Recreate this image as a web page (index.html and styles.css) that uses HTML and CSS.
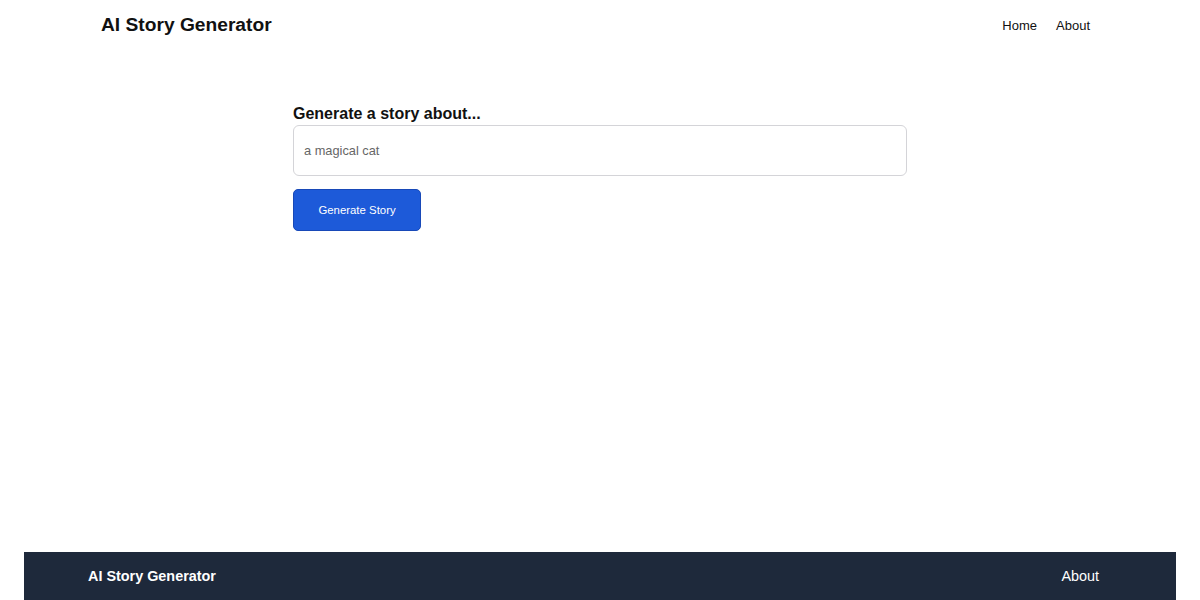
FILE: index.html
```html
<!DOCTYPE html>
<html lang="en">

<head>
    <meta charset="UTF-8">
    <meta name="viewport" content="width=device-width, initial-scale=1.0">
    <title>AI Story Generator</title>
    <link rel="stylesheet" href="styles.css">
</head>

<body>
    <header class="topbar">
        <div class="topbar-inner">
            <h1 class="brand">AI Story Generator</h1>
            <nav class="nav">
                <a href="#">Home</a>
                <a href="#">About</a>
            </nav>
        </div>
    </header>

    <main class="page">
        <form class="story-form">
            <label class="prompt-label" for="prompt">Generate a story about...</label>
            <input id="prompt" class="prompt-input" type="text" placeholder="a magical cat">
            <button type="button" class="btn-generate">Generate Story</button>
        </form>
    </main>

    <footer class="footer">
        <span class="footer-brand">AI Story Generator</span>
        <a class="footer-link" href="#">About</a>
    </footer>
</body>

</html>
```

FILE: styles.css
```css
* {
    margin: 0;
    padding: 0;
    box-sizing: border-box;
}

body {
    font-family: "Liberation Sans", Arial, sans-serif;
    color: #111;
    background: #fff;
    height: 600px;
    display: flex;
    flex-direction: column;
}

/* top navigation */
.topbar-inner {
    width: 1000px;
    margin: 0 auto;
    height: 50px;
    display: flex;
    justify-content: space-between;
    align-items: center;
}

.brand {
    font-size: 19.2px;
    font-weight: bold;
    padding-left: 1px;
}

.nav {
    display: flex;
    gap: 19px;
    padding-right: 10px;
}

.nav a {
    font-size: 13px;
    color: #111;
    text-decoration: none;
}

/* story form */
.page {
    flex: 1;
}

.story-form {
    width: 614px;
    margin: 54px auto 0;
    display: flex;
    flex-direction: column;
    align-items: flex-start;
}

.prompt-label {
    font-size: 16px;
    font-weight: bold;
    line-height: 20px;
    margin-bottom: 1px;
}

.prompt-input {
    width: 100%;
    height: 51px;
    border: 1px solid #d4d4d8;
    border-radius: 6px;
    padding: 0 10px;
    font-family: "Liberation Sans", Arial, sans-serif;
    font-size: 12.8px;
    outline: none;
}

.prompt-input::placeholder {
    color: #666;
}

.btn-generate {
    margin-top: 13px;
    width: 128px;
    height: 42px;
    border: 1px solid #1849b8;
    border-radius: 5px;
    background-color: #1d5ad9;
    color: #fff;
    font-family: "Liberation Sans", Arial, sans-serif;
    font-size: 11.4px;
    cursor: pointer;
}

/* footer */
.footer {
    margin: 0 24px;
    height: 48px;
    background-color: #1e293b;
    color: #fff;
    display: flex;
    justify-content: space-between;
    align-items: center;
    padding: 0 77px 0 64px;
}

.footer-brand {
    font-size: 14.4px;
    font-weight: bold;
}

.footer-link {
    font-size: 14.4px;
    color: #fff;
    text-decoration: none;
}
```
